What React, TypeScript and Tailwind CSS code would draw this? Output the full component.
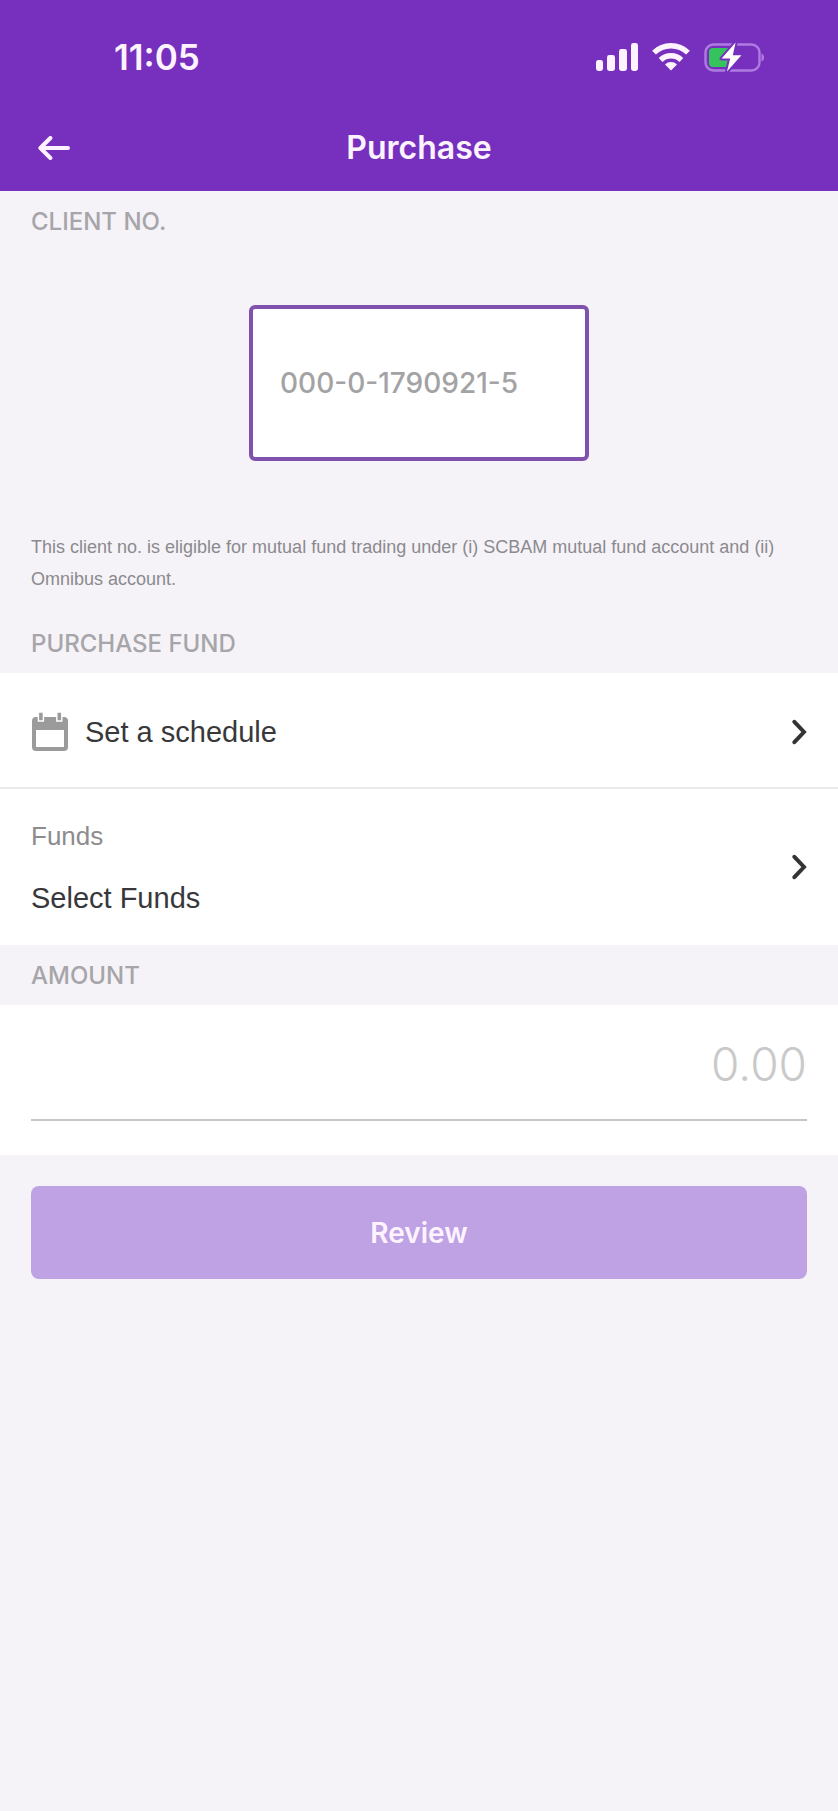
import type { ReactNode } from "react";

function SignalIcon() {
  return (
    <svg viewBox="0 0 42 28" className="h-7 w-[42px]" fill="currentColor" aria-hidden="true">
      <rect x="0" y="17" width="7" height="11" rx="2.4" />
      <rect x="11" y="12" width="8" height="16" rx="2.4" />
      <rect x="23" y="6" width="8" height="22" rx="2.4" />
      <rect x="35" y="0" width="7" height="28" rx="2.4" />
    </svg>
  );
}

function WifiIcon() {
  return (
    <svg viewBox="0 0 38 28" className="h-7 w-[38px]" aria-hidden="true">
      <g fill="none" stroke="currentColor" strokeWidth="5.4">
        <path d="M2 9.6a24.4 24.4 0 0 1 34 0" />
        <path d="M8.6 17a15 15 0 0 1 20.8 0" />
      </g>
      <path d="M19 27.6l-6-6.2a8.6 8.6 0 0 1 12 0z" fill="currentColor" />
    </svg>
  );
}

function BatteryIcon() {
  return (
    <svg viewBox="0 0 62 32" className="h-8 w-[62px]" aria-hidden="true">
      <rect x="1.5" y="3.5" width="54" height="26" rx="8" fill="none" stroke="#b07be0" strokeWidth="2.4" />
      <path d="M57.5 12.5c3.4 1 3.4 7 0 8z" fill="#b07be0" />
      <path d="M9 7h18v19H9a4 4 0 0 1-4-4V11a4 4 0 0 1 4-4z" fill="#34c35c" />
      <path
        d="M31.6 1.6L17.6 17.6h8.6L23 30.4 37.4 14.2h-8.6z"
        fill="#fff"
        stroke="#7630bd"
        strokeWidth="4"
        strokeLinejoin="round"
        paintOrder="stroke"
      />
    </svg>
  );
}

function BackIcon() {
  return (
    <svg
      viewBox="0 0 32 24"
      className="h-6 w-8"
      fill="none"
      stroke="currentColor"
      strokeWidth="4"
      strokeLinecap="round"
      strokeLinejoin="round"
      aria-hidden="true"
    >
      <path d="M12.4 2L2.4 12l10 10M2.4 12H30" />
    </svg>
  );
}

function CalendarIcon() {
  return (
    <svg viewBox="0 0 38 40" className="h-10 w-[38px]" aria-hidden="true">
      <path
        fillRule="evenodd"
        d="M5 5h28a4 4 0 0 1 4 4v26a4 4 0 0 1-4 4H5a4 4 0 0 1-4-4V9a4 4 0 0 1 4-4zM5 18v17h28V18z"
        fill="#9b9b9b"
      />
      <g fill="#9b9b9b" stroke="#fff" strokeWidth="1.4">
        <path d="M7.4 0h5v9h-5zM25.8 0h5v9h-5z" />
      </g>
    </svg>
  );
}

function ChevronIcon() {
  return (
    <svg
      viewBox="0 0 16 26"
      className="h-[26px] w-4 shrink-0"
      fill="none"
      stroke="#333436"
      strokeWidth="4"
      strokeLinecap="round"
      strokeLinejoin="miter"
      aria-hidden="true"
    >
      <path d="M3.4 2.8L13 13 3.4 23.2" />
    </svg>
  );
}

function SectionLabel({ htmlFor, children }: { htmlFor?: string; children: ReactNode }) {
  const className =
    "block px-[31px] pt-[15px] pb-[13px] font-['Inter',sans-serif] text-[24px] leading-8 font-medium text-[#a6a5a9]";
  return htmlFor ? (
    <label htmlFor={htmlFor} className={className}>
      {children}
    </label>
  ) : (
    <h2 className={className}>{children}</h2>
  );
}

export default function App() {
  return (
    <div className="min-h-screen bg-[#f5f3f7] font-['Liberation_Sans',sans-serif] text-[#38383a]">
      <header className="bg-[#7630bd] font-['Inter',sans-serif] text-[#fdf3ff]">
        <div className="flex h-[104px] items-center justify-between pt-2.5 pr-[72px] pl-[114px]">
          <span className="text-[35px] leading-10 font-semibold">11:05</span>
          <div className="flex items-center gap-3.5">
            <SignalIcon />
            <WifiIcon />
            <BatteryIcon />
          </div>
        </div>
        <div className="grid h-[87px] grid-cols-[1fr_auto_1fr] items-center px-[38px]">
          <button type="button" aria-label="Back" className="w-8">
            <BackIcon />
          </button>
          <h1 className="text-[32px] leading-10 font-semibold">Purchase</h1>
        </div>
      </header>

      <main>
        <section>
          <SectionLabel htmlFor="client-no">CLIENT NO.</SectionLabel>
          <div className="flex justify-center pt-[54px] pb-[70px]">
            <input
              id="client-no"
              readOnly
              value="000-0-1790921-5"
              className="h-[156px] w-[340px] rounded-md border-4 border-[#8052ad] bg-white px-[27px] font-['Inter',sans-serif] text-[28px] font-medium text-[#a3a3a5] outline-none"
            />
          </div>
          <p className="px-[31px] pb-[18px] text-[18px] leading-8 text-[#8b8a8f]">
            This client no. is eligible for mutual fund trading under (i) SCBAM mutual fund account and (ii) Omnibus
            account.
          </p>
        </section>

        <section>
          <SectionLabel>PURCHASE FUND</SectionLabel>
          <div className="divide-y-2 divide-[#ebebed] bg-white">
            <button
              type="button"
              className="flex h-[116px] w-full items-center justify-between px-[31px] pt-1 text-left"
            >
              <span className="flex items-center gap-4">
                <CalendarIcon />
                <span className="text-[29px] leading-10">Set a schedule</span>
              </span>
              <ChevronIcon />
            </button>
            <button type="button" className="flex w-full items-center justify-between px-[31px] py-[27px] text-left">
              <span className="flex flex-col gap-[22px]">
                <span className="text-[26px] leading-10 text-[#8c8c8e]">Funds</span>
                <span className="text-[29px] leading-10">Select Funds</span>
              </span>
              <ChevronIcon />
            </button>
          </div>
        </section>

        <section>
          <SectionLabel htmlFor="amount">AMOUNT</SectionLabel>
          <div className="bg-white px-[31px] pb-[34px]">
            <input
              id="amount"
              inputMode="decimal"
              placeholder="0.00"
              className="block h-[116px] w-full border-b-2 border-[#c6c6c8] pt-1 text-right font-['Inter',sans-serif] text-[46px] font-light outline-none placeholder:text-[#c9c9c9]"
            />
          </div>
        </section>

        <div className="px-[31px] py-[31px]">
          <button
            type="button"
            disabled
            className="h-[93px] w-full rounded-lg bg-[#bfa2e3] font-['Inter',sans-serif] text-[28px] font-semibold text-[#fdf3ff]"
          >
            Review
          </button>
        </div>
      </main>
    </div>
  );
}
